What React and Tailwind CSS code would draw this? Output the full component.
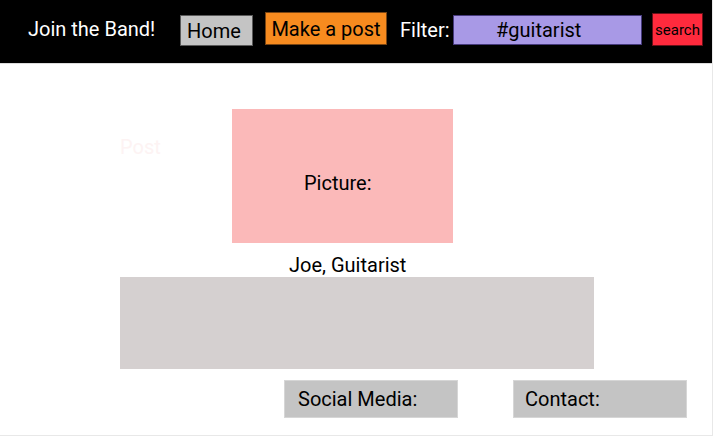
import React from "react";

export default function App() {
  return (
    <div className="w-[714px] h-[436px] bg-white overflow-hidden" style={{ fontFamily: "Roboto, 'Liberation Sans', sans-serif" }}>
      <div className="w-[713px] h-[436px] border-r border-b border-[#e8e8e8]">
        <div className="h-[64px] bg-black border-b border-[#dcdcdc] flex items-start text-[20px] leading-[24px]">
          <div className="w-[180px] pl-[28px] mt-[17px] text-white">Join the Band!</div>
          <div className="mt-[15px] w-[73px] h-[31px] bg-[#c4c4c4] border border-[#5a5a5a] flex items-center pl-[6px] text-black">Home</div>
          <div className="ml-[12px] mt-[12px] w-[122px] h-[33px] bg-[#f78b1f] border border-[#7a4512] flex items-center justify-center text-black">Make a post</div>
          <div className="ml-[13px] w-[53px] mt-[18px] text-white">Filter:</div>
          <div className="mt-[15px] w-[189px] h-[30px] bg-[#a899e6] border border-[#463a7c] flex items-center pl-[42px] text-black">#guitarist</div>
          <div className="ml-[10px] mt-[13px] w-[51px] h-[33px] bg-[#ff2a3d] border border-[#6a1018] flex items-center justify-center text-[15px] text-black">search</div>
        </div>
        <div className="flex items-start pl-[120px] mt-[45px]">
          <div className="w-[112px] mt-[23px] text-[20px] leading-[30px] text-[#fdf3f3]">Post</div>
          <div className="w-[221px] h-[134px] bg-[#fbb9b9] flex items-center pl-[72px] pt-[14px] text-[20px] text-black">Picture:</div>
        </div>
        <div className="mt-[10px] pl-[289px] h-[24px] text-[20px] leading-[24px] text-black">Joe, Guitarist</div>
        <div className="ml-[120px] w-[474px] h-[92px] bg-[#d5d0d0]"></div>
        <div className="flex mt-[11px]">
          <div className="ml-[284px] w-[174px] h-[38px] bg-[#c4c4c4] border border-[#d6d6d6] flex items-center pl-[13px] text-[20px] text-black">Social Media:</div>
          <div className="ml-[55px] w-[174px] h-[38px] bg-[#c4c4c4] border border-[#d6d6d6] flex items-center pl-[11px] text-[20px] text-black">Contact:</div>
        </div>
      </div>
    </div>
  );
}
